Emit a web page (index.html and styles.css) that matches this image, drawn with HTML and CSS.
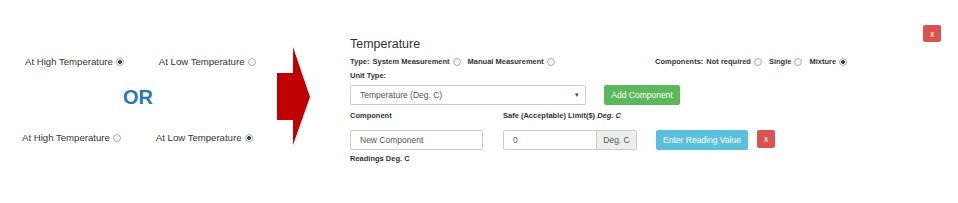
FILE: index.html
```html
<!DOCTYPE html>
<html lang="en">
<head>
    <meta charset="UTF-8">
    <title>Temperature Component</title>
    <link rel="stylesheet" href="styles.css">
</head>
<body>
    <div class="page">
        <!-- left: the two choices -->
        <div class="choices">
            <div class="choice-row first">
                <label class="choice">At High Temperature <input type="radio" name="t1" checked></label>
                <label class="choice">At Low Temperature <input type="radio" name="t1"></label>
            </div>
            <div class="or">OR</div>
            <div class="choice-row second">
                <label class="choice">At High Temperature <input type="radio" name="t2"></label>
                <label class="choice">At Low Temperature <input type="radio" name="t2" checked></label>
            </div>
        </div>

        <svg class="arrow" width="34" height="98" viewBox="0 0 34 98">
            <polygon points="0,26 16,26 16,0 33,50 16,98 16,73 0,73" fill="#c00000"/>
        </svg>

        <!-- right: form panel -->
        <div class="panel">
            <div class="panel-head">
                <h3>Temperature</h3>
                <button class="btn btn-danger btn-close">x</button>
            </div>

            <div class="type-row">
                <div class="radio-line">
                    <span>Type:</span>
                    <label>System Measurement <input type="radio" name="type"></label>
                    <label>Manual Measurement <input type="radio" name="type"></label>
                </div>
                <div class="radio-line">
                    <span>Components:</span>
                    <label>Not required <input type="radio" name="comp"></label>
                    <label>Single <input type="radio" name="comp"></label>
                    <label>Mixture <input type="radio" name="comp" checked></label>
                </div>
            </div>

            <div class="field-label">Unit Type:</div>
            <div class="unit-row">
                <div class="select">
                    <span>Temperature (Deg. C)</span>
                    <span class="caret">&#9662;</span>
                </div>
                <button class="btn btn-success">Add Component</button>
            </div>

            <div class="labels-row">
                <div class="field-label col-name">Component</div>
                <div class="field-label">Safe (Acceptable) Limit($) <i>Deg. C</i></div>
            </div>
            <div class="inputs-row">
                <input class="text-input name-input" type="text" value="New Component">
                <div class="input-group">
                    <input class="text-input" type="text" value="0">
                    <span class="addon">Deg. C</span>
                </div>
                <button class="btn btn-info">Enter Reading Value</button>
                <button class="btn btn-danger btn-small">x</button>
            </div>

            <div class="field-label readings">Readings Deg. C</div>
        </div>
    </div>
</body>
</html>
```

FILE: styles.css
```css
body {
    margin: 0;
    font-family: "Liberation Sans", Arial, sans-serif;
    color: #333;
    background: #fff;
}
.page {
    display: flex;
    align-items: flex-start;
    width: 958px;
    height: 203px;
}

/* left side */
.choices {
    width: 277px;
    padding-top: 56px;
}
.choice-row {
    display: flex;
    gap: 35px;
    font-size: 9.6px;
    line-height: 12px;
}
.choice-row.first {
    padding-left: 25px;
}
.choice-row.second {
    padding-left: 22px;
    margin-top: 23px;
}
.choice {
    display: flex;
    align-items: center;
    gap: 3px;
    color: #333;
}
.or {
    margin: 17px 0 0 123px;
    font-size: 20px;
    line-height: 24px;
    font-weight: bold;
    color: #2e75b6;
}
.arrow {
    margin-top: 47px;
}

input[type="radio"] {
    appearance: none;
    -webkit-appearance: none;
    width: 8px;
    height: 8px;
    margin: 0;
    border: 1px solid #b0b0b0;
    border-radius: 50%;
    background: #f3f3f3;
    box-sizing: border-box;
}
input[type="radio"]:checked {
    background: radial-gradient(circle, #444 0, #444 1.6px, #f3f3f3 2.2px);
}

/* right panel */
.panel {
    margin-left: 39px;
    width: 591px;
    padding-top: 25px;
}
.panel-head {
    display: flex;
    justify-content: space-between;
    align-items: flex-start;
}
h3 {
    margin: 12px 0 0 0;
    font-size: 12.5px;
    line-height: 14px;
    font-weight: normal;
    color: #333;
}
.btn {
    border: none;
    border-radius: 2px;
    color: #fff;
    font-family: "Liberation Sans", Arial, sans-serif;
    font-size: 8.5px;
    padding: 0;
    height: 20px;
    white-space: nowrap;
    cursor: pointer;
}
.btn-danger {
    background-color: #d9534f;
}
.btn-success {
    background-color: #5cb85c;
    width: 76px;
}
.btn-info {
    background-color: #5bc0de;
    width: 92px;
    margin-left: 19px;
}
.btn-close {
    width: 18px;
    height: 17px;
}
.btn-small {
    width: 18px;
    height: 18px;
    margin-left: 9px;
    align-self: flex-start;
}

.type-row {
    display: flex;
    margin-top: 6px;
}
.radio-line {
    display: flex;
    align-items: center;
    gap: 7px;
    font-size: 7.5px;
    line-height: 10px;
    font-weight: bold;
    color: #333;
}
.radio-line:first-child {
    width: 305px;
}
.radio-line span {
    margin-right: -4px;
}
.radio-line label {
    display: flex;
    align-items: center;
    gap: 3px;
}
.field-label {
    font-size: 7.5px;
    line-height: 10px;
    font-weight: bold;
    color: #333;
}
.type-row + .field-label {
    margin-top: 4px;
}
.unit-row {
    display: flex;
    gap: 18px;
    margin-top: 4px;
}
.select {
    width: 236px;
    height: 20px;
    box-sizing: border-box;
    border: 1px solid #ccc;
    border-radius: 2px;
    display: flex;
    justify-content: space-between;
    align-items: center;
    padding: 0 6px 0 9px;
    font-size: 8.5px;
    color: #555;
}
.caret {
    font-size: 7px;
    color: #444;
}
.labels-row {
    display: flex;
    margin-top: 6px;
}
.col-name {
    width: 153px;
}
.inputs-row {
    display: flex;
    margin-top: 9px;
}
.text-input {
    height: 20px;
    box-sizing: border-box;
    border: 1px solid #ccc;
    border-radius: 2px;
    padding: 0 9px;
    font-family: "Liberation Sans", Arial, sans-serif;
    font-size: 8.5px;
    color: #555;
}
.name-input {
    width: 133px;
    margin-right: 20px;
}
.input-group {
    display: flex;
}
.input-group .text-input {
    width: 94px;
    border-radius: 2px 0 0 2px;
}
.addon {
    width: 40px;
    height: 20px;
    box-sizing: border-box;
    border: 1px solid #ccc;
    border-left: none;
    border-radius: 0 2px 2px 0;
    background: #eee;
    color: #555;
    font-size: 8.5px;
    display: flex;
    align-items: center;
    justify-content: center;
}
.readings {
    margin-top: 4px;
}
```
